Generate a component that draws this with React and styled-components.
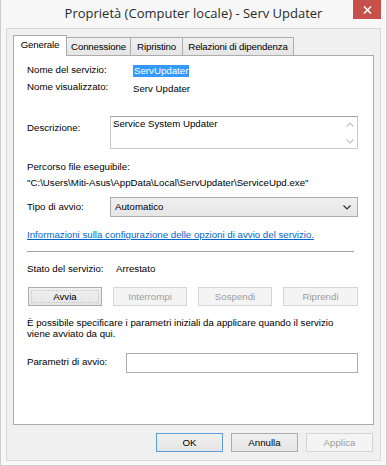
import React from 'react';
import styled, { createGlobalStyle } from 'styled-components';

const GlobalStyle = createGlobalStyle`
  html, body {
    margin: 0;
    padding: 0;
  }
  body {
    width: 387px;
    height: 466px;
    overflow: hidden;
    background: #f7f7f7;
    font-family: "Liberation Sans", Arial, sans-serif;
    font-size: 9.7px;
    line-height: 12px;
    color: #000;
  }
`;

const Frame = styled.div`
  width: 387px;
  height: 466px;
  box-sizing: border-box;
  background: #f7f7f7;
  border: 1px solid #cdcdcd;
  border-top: none;
  display: flex;
  flex-direction: column;
`;

const TitleBar = styled.div`
  height: 28px;
  flex: none;
  display: grid;
  grid-template-columns: 1fr auto 1fr;
`;

const Title = styled.div`
  grid-column: 2;
  align-self: center;
  font-family: "Open Sans", "Noto Sans", sans-serif;
  font-size: 13px;
  line-height: 18px;
  color: #2b2b2b;
  white-space: nowrap;
  margin-top: -2px;
`;

const CloseButton = styled.div`
  grid-column: 3;
  justify-self: end;
  align-self: start;
  width: 28px;
  height: 19px;
  margin-right: 5px;
  background: #c7504b;
  display: flex;
  align-items: center;
  justify-content: center;
`;

const Client = styled.div`
  flex: 1;
  margin: 0 5px 5px 5px;
  background: #f0f0f0;
  border: 1px solid #d9d9d9;
  padding: 6px 6px 8px 6px;
  display: flex;
  flex-direction: column;
`;

const TabStrip = styled.div`
  display: flex;
  align-items: flex-end;
  height: 21px;
  margin-bottom: -1px;
  position: relative;
  z-index: 1;
`;

const Tab = styled.div`
  box-sizing: border-box;
  width: ${p => p.w}px;
  height: ${p => (p.active ? 21 : 19)}px;
  margin-left: ${p => (p.first ? 0 : -1)}px;
  border: 1px solid #acacac;
  border-bottom: ${p => (p.active ? 'none' : '1px solid #acacac')};
  background: ${p => (p.active ? '#fff' : 'linear-gradient(#f0f0f0, #e5e5e5)')};
  display: flex;
  align-items: center;
  justify-content: center;
  padding-bottom: ${p => (p.active ? 2 : 0)}px;
  letter-spacing: -0.15px;
  white-space: nowrap;
  position: relative;
  z-index: ${p => (p.active ? 2 : 1)};
`;

const Panel = styled.div`
  height: 370px;
  box-sizing: border-box;
  flex: none;
  background: #fff;
  border: 1px solid #acacac;
  padding: 0 15px 0 13px;
  display: flex;
  flex-direction: column;
`;

const Row = styled.div`
  display: flex;
  align-items: flex-start;
  margin-top: ${p => p.mt || 0}px;
`;

const Label = styled.div`
  width: ${p => p.w}px;
  flex: none;
  margin-top: ${p => p.mt || 0}px;
  white-space: nowrap;
`;

const Value = styled.div`
  margin-top: ${p => p.mt || 0}px;
  white-space: nowrap;
`;

const Selected = styled.span`
  display: inline-block;
  margin-top: 1px;
  padding: 0 1px;
  background: #3399ff;
  color: #fff;
`;

const Line = styled.div`
  margin-top: ${p => p.mt || 0}px;
  white-space: nowrap;
`;

const Paragraph = styled.div`
  margin-top: ${p => p.mt || 0}px;
  line-height: 11px;
`;

const TextBox = styled.div`
  flex: 1;
  height: 33px;
  box-sizing: border-box;
  border: 1px solid #c9c9c9;
  border-top-color: #a0a0a0;
  display: flex;
`;

const TextArea = styled.div`
  flex: 1;
  padding: 1px 2px;
`;

const ScrollTrack = styled.div`
  width: 15px;
  display: flex;
  flex-direction: column;
  justify-content: space-between;
  align-items: center;
  padding: 5px 0 4px;
`;

const Combo = styled.div`
  flex: 1;
  height: 20px;
  box-sizing: border-box;
  border: 1px solid #acacac;
  background: linear-gradient(#f0f0f0, #e5e5e5);
  display: flex;
  align-items: center;
  justify-content: space-between;
  padding: 0 6px 0 4px;
`;

const Input = styled.div`
  flex: 1;
  height: 20px;
  box-sizing: border-box;
  border: 1px solid #abadb3;
  background: #fff;
`;

const Link = styled.a`
  display: block;
  margin-top: ${p => p.mt || 0}px;
  color: #0066cc;
  text-decoration: underline;
  white-space: nowrap;
  cursor: pointer;
`;

const Separator = styled.div`
  height: 1px;
  margin-top: ${p => p.mt || 0}px;
  margin-right: 4px;
  background: #a0a0a0;
`;

const ButtonRow = styled.div`
  display: flex;
  justify-content: space-between;
  margin-top: ${p => p.mt || 0}px;
  padding-left: ${p => p.pl || 0}px;
`;

const Button = styled.div`
  width: ${p => p.w}px;
  height: 19px;
  box-sizing: border-box;
  display: flex;
  align-items: center;
  justify-content: center;
  border: 1px solid ${p => (p.disabled ? '#d5d5d5' : p.primary ? '#5c9fd8' : '#acacac')};
  background: ${p => (p.disabled ? '#f4f4f4' : 'linear-gradient(#f0f0f0, #e5e5e5)')};
  color: ${p => (p.disabled ? '#9d9d9d' : '#000')};
  position: relative;
  ${p => p.focused && `
    &::after {
      content: '';
      position: absolute;
      left: 2px;
      right: 2px;
      top: 2px;
      bottom: 2px;
      border: 1px dotted #c4c4c4;
    }
  `}
`;

const Footer = styled.div`
  display: flex;
  justify-content: flex-end;
  gap: 8px;
  margin-top: 8px;
  padding-right: 1px;
`;

const Chevron = ({ up, color = '#333' }) => (
  <svg width="8" height="5" viewBox="0 0 8 5">
    <polyline
      points={up ? '0.5,4.5 4,1 7.5,4.5' : '0.5,0.5 4,4 7.5,0.5'}
      fill="none"
      stroke={color}
      strokeWidth="1.2"
    />
  </svg>
);

const tabs = [
  { label: 'Generale', w: 54 },
  { label: 'Connessione', w: 65 },
  { label: 'Ripristino', w: 53 },
  { label: 'Relazioni di dipendenza', w: 112 },
];

const App = () => (
  <>
    <GlobalStyle />
    <Frame>
      <TitleBar>
        <Title>Proprietà (Computer locale) - Serv Updater</Title>
        <CloseButton>
          <svg width="9" height="8" viewBox="0 0 9 8">
            <path d="M1 0.5 L8 7.5 M8 0.5 L1 7.5" stroke="#fff" strokeWidth="1.6" />
          </svg>
        </CloseButton>
      </TitleBar>
      <Client>
        <TabStrip>
          {tabs.map((t, i) => (
            <Tab key={t.label} w={t.w} active={i === 0} first={i === 0}>{t.label}</Tab>
          ))}
        </TabStrip>
        <Panel>
          <Row mt={8}>
            <Label w={106}>Nome del servizio:</Label>
            <Selected>ServUpdater</Selected>
          </Row>
          <Row mt={4}>
            <Label w={106}>Nome visualizzato:</Label>
            <Value mt={2}>Serv Updater</Value>
          </Row>
          <Row mt={21}>
            <Label w={83} mt={6}>Descrizione:</Label>
            <TextBox>
              <TextArea>Service System Updater</TextArea>
              <ScrollTrack>
                <Chevron up color="#c4c4c4" />
                <Chevron color="#c4c4c4" />
              </ScrollTrack>
            </TextBox>
          </Row>
          <Line mt={12}>Percorso file eseguibile:</Line>
          <Line mt={4}>"C:\Users\Miti-Asus\AppData\Local\ServUpdater\ServiceUpd.exe"</Line>
          <Row mt={8}>
            <Label w={83} mt={4}>Tipo di avvio:</Label>
            <Combo>
              <span>Automatico</span>
              <Chevron />
            </Combo>
          </Row>
          <Link mt={12}>Informazioni sulla configurazione delle opzioni di avvio del servizio.</Link>
          <Separator mt={10} />
          <Row mt={11}>
            <Label w={89}>Stato del servizio:</Label>
            <Value>Arrestato</Value>
          </Row>
          <ButtonRow mt={12} pl={1}>
            <Button w={74} focused>Avvia</Button>
            <Button w={74} disabled>Interrompi</Button>
            <Button w={74} disabled>Sospendi</Button>
            <Button w={75} disabled>Riprendi</Button>
          </ButtonRow>
          <Paragraph mt={11}>
            È possibile specificare i parametri iniziali da applicare quando il servizio
            <br />
            viene avviato da qui.
          </Paragraph>
          <Row mt={14}>
            <Label w={99} mt={3}>Parametri di avvio:</Label>
            <Input />
          </Row>
        </Panel>
        <Footer>
          <Button w={67} primary>OK</Button>
          <Button w={67}>Annulla</Button>
          <Button w={67} disabled>Applica</Button>
        </Footer>
      </Client>
    </Frame>
  </>
);

export default App;
